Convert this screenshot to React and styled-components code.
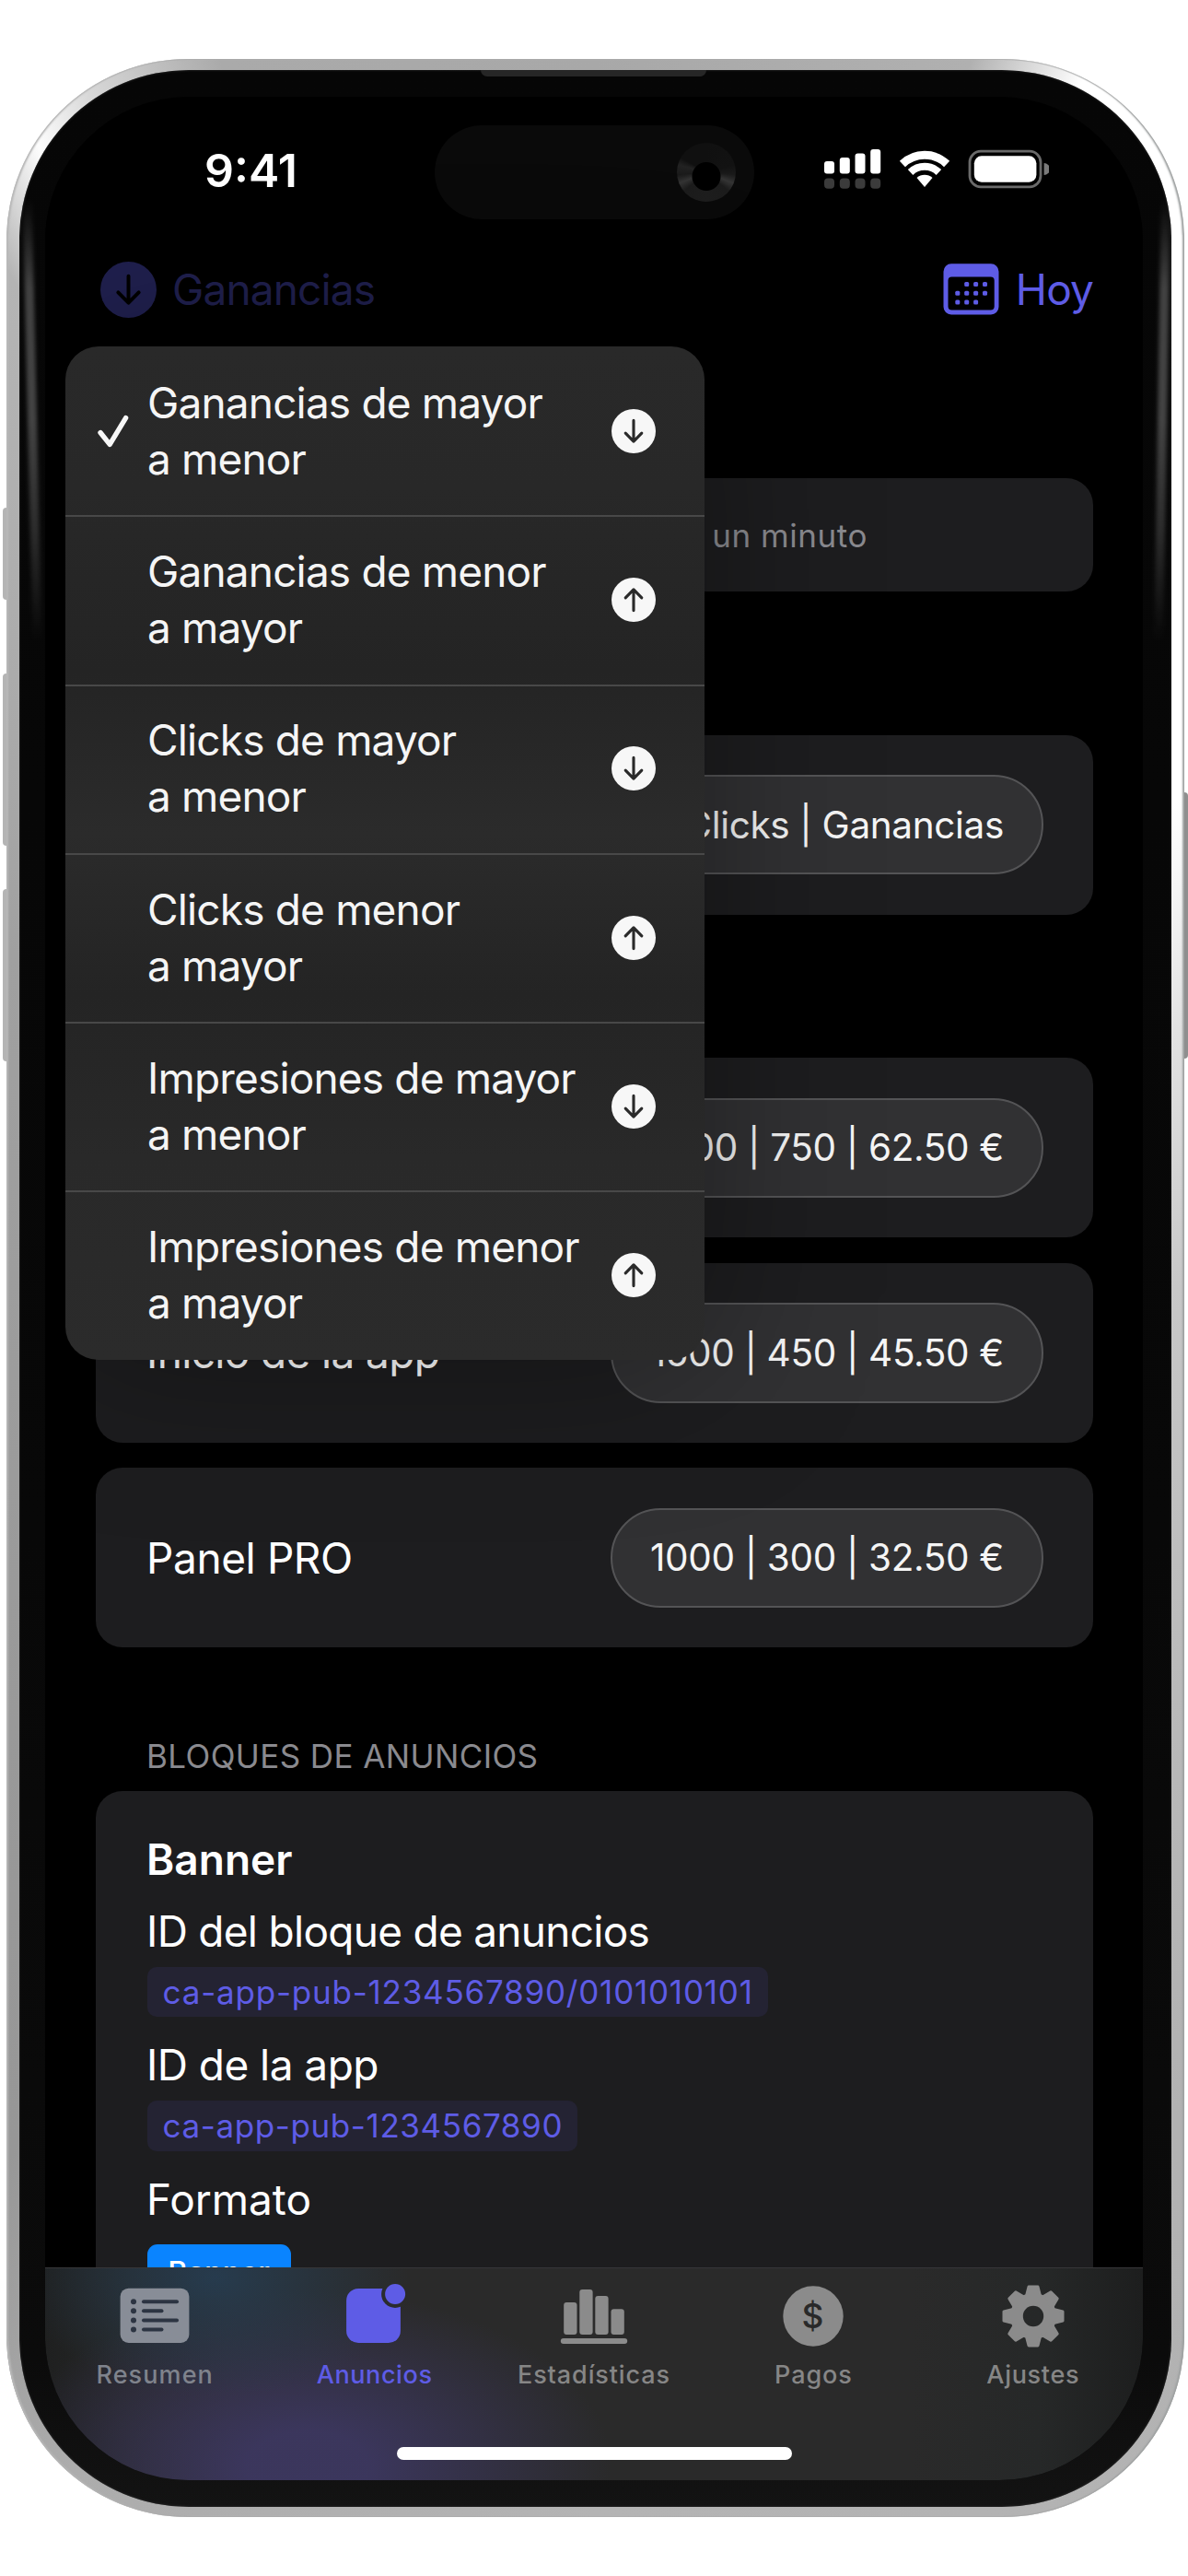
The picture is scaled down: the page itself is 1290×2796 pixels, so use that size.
import React from 'react';
import styled, { createGlobalStyle, css } from 'styled-components';

const COLORS = {
  accent: '#5e5ce6',
  accentDim: '#20204f',
  card: '#1d1d1f',
  grey: '#8b8b8b',
  white: '#f5f5f5',
};

const SORT_OPTIONS = [
  { first: 'Ganancias de mayor', second: 'a menor', down: true, checked: true },
  { first: 'Ganancias de menor', second: 'a mayor' },
  { first: 'Clicks de mayor', second: 'a menor', down: true },
  { first: 'Clicks de menor', second: 'a mayor' },
  { first: 'Impresiones de mayor', second: 'a menor', down: true },
  { first: 'Impresiones de menor', second: 'a mayor' },
];

const ArrowCircle = ({ down, size, color, arrow }) => (
  <svg width={size} height={size} viewBox="0 0 48 48">
    <circle cx="24" cy="24" r="24" fill={color} />
    <path
      d="M24 12.4V35M15.2 26.2L24 35.2L32.8 26.2"
      transform={down ? undefined : 'rotate(180 24 24)'}
      fill="none"
      stroke={arrow}
      strokeWidth="3.1"
      strokeLinecap="round"
      strokeLinejoin="round"
    />
  </svg>
);

const CheckIcon = () => (
  <svg width="36" height="36" viewBox="0 0 36 36">
    <path
      d="M4 19.5L14.2 32.4L31.6 3.600"
      fill="none"
      stroke="#f7f7f7"
      strokeWidth="5.4"
      strokeLinecap="round"
      strokeLinejoin="round"
    />
  </svg>
);

const CalendarIcon = () => (
  <svg width="61" height="56" viewBox="1024 286.5 61 56">
    <path
      fillRule="evenodd"
      fill={COLORS.accent}
      d="M1033 286.7h43a8.500 8.500 0 0 1 8.500 8.500v38.300a8.500 8.500 0 0 1-8.500 8.500h-43a8.500 8.500 0 0 1-8.500-8.500v-38.300a8.500 8.500 0 0 1 8.500-8.500zM1033.500 301a4 4 0 0 0-4 4v28a4 4 0 0 0 4 4h42.200a4 4 0 0 0 4-4v-28a4 4 0 0 0-4-4z"
    />
    <g fill={COLORS.accent}>
      {[
        [1, 0], [2, 0], [3, 0],
        [0, 1], [1, 1], [2, 1], [3, 1],
        [0, 2], [1, 2], [2, 2],
      ].map(([col, row]) => (
        <rect
          key={`${col}-${row}`}
          x={1037.3 + col * 9.9}
          y={306.4 + row * 9.8}
          width="5"
          height="5"
          rx="1.5"
        />
      ))}
    </g>
  </svg>
);

const SignalIcon = () => (
  <svg width="62" height="43" viewBox="896 162 62 43">
    <g fill="#fff">
      <rect x="896" y="175" width="11" height="13.5" rx="3" />
      <rect x="912.8" y="171" width="11" height="17.5" rx="3" />
      <rect x="929.5" y="166.5" width="11" height="22" rx="3" />
      <rect x="946.2" y="162" width="11" height="26.5" rx="3" />
    </g>
    <g fill="#3b3b3b">
      <rect x="896" y="193.4" width="11" height="11.4" rx="4" />
      <rect x="912.8" y="193.4" width="11" height="11.4" rx="4" />
      <rect x="929.5" y="193.4" width="11" height="11.4" rx="4" />
      <rect x="946.2" y="193.4" width="11" height="11.4" rx="4" />
    </g>
  </svg>
);

const WifiIcon = () => (
  <svg width="56" height="43" viewBox="977 162 56 43">
    <g fill="none" stroke="#fff" strokeWidth="8.8">
      <path d="M980.900 178A34.700 34.700 0 0 1 1029.100 178" />
      <path d="M989.600 187A22.200 22.200 0 0 1 1020.400 187" strokeWidth="8" />
    </g>
    <path d="M996.500 193A12.600 12.600 0 0 1 1013.500 193L1005 203z" fill="#fff" />
  </svg>
);

const BatteryIcon = () => (
  <svg width="88" height="43" viewBox="1051 162 88 43">
    <rect x="1053" y="164.2" width="77" height="38.6" rx="12" fill="none" stroke="#6a6a6a" strokeWidth="2.8" />
    <rect x="1057.8" y="169.3" width="67.6" height="28.4" rx="8" fill="#fff" />
    <path d="M1133.600 177a6.500 6.500 0 0 1 0 13z" fill="#7a7a7a" />
  </svg>
);

const SummaryIcon = () => (
  <svg width="76" height="70" viewBox="129 2479 76 70">
    <rect x="129.6" y="2483.7" width="74.8" height="59.3" rx="9" fill="#888d97" />
    {[2498.3, 2508.3, 2518.4, 2528.6].map((y, i) => (
      <g key={y} stroke="#2c3442" strokeLinecap="round">
        <path d={`M144 ${y}h.01`} strokeWidth="6" />
        <path d={`M155 ${y}H${i % 2 ? 174.5 : 191}`} strokeWidth="4" />
      </g>
    ))}
  </svg>
);

const AdsIcon = () => (
  <svg width="76" height="70" viewBox="368.5 2479 76 70">
    <mask id="badge-cut">
      <rect x="360" y="2470" width="100" height="90" fill="#fff" />
      <circle cx="428.6" cy="2490" r="15" fill="#000" />
    </mask>
    <rect
      x="375.6"
      y="2484"
      width="58.8"
      height="59"
      rx="13"
      fill={COLORS.accent}
      mask="url(#badge-cut)"
    />
    <circle cx="428.6" cy="2490" r="11" fill={COLORS.accent} />
  </svg>
);

const ChartIcon = () => (
  <svg width="76" height="70" viewBox="607 2479 76 70">
    <g fill={COLORS.grey}>
      <rect x="612.2" y="2499" width="14.3" height="35" rx="3" />
      <rect x="629.3" y="2485" width="14.3" height="49" rx="3" />
      <rect x="646.3" y="2492" width="14.3" height="42" rx="3" />
      <rect x="663.5" y="2506.3" width="14.3" height="27.7" rx="3" />
      <rect x="608.8" y="2538" width="72.4" height="6" rx="3" />
    </g>
  </svg>
);

const DollarIcon = () => (
  <svg width="76" height="70" viewBox="845 2479 76 70">
    <circle cx="883" cy="2514" r="32.7" fill={COLORS.grey} />
    <text
      x="883"
      y="2527"
      textAnchor="middle"
      fontFamily="Inter, sans-serif"
      fontSize="37"
      fill="#292929"
    >
      $
    </text>
  </svg>
);

const GearIcon = () => (
  <svg width="76" height="70" viewBox="-38 -35 76 70">
    <mask id="gear-hole">
      <rect x="-40" y="-40" width="80" height="80" fill="#fff" />
      <circle r="11.2" fill="#000" />
    </mask>
    <g mask="url(#gear-hole)" fill={COLORS.grey} stroke={COLORS.grey} strokeWidth="3" strokeLinejoin="round">
      <circle r="23.5" />
      {[0, 45, 90, 135, 180, 225, 270, 315].map((angle) => (
        <path key={angle} d="M-7.800 -21L-5 -32H5L7.800 -21z" transform={`rotate(${angle})`} />
      ))}
    </g>
  </svg>
);

const TABS = [
  { label: 'Resumen', Icon: SummaryIcon, track: 1.1, tint: '#7f838c' },
  { label: 'Anuncios', Icon: AdsIcon, track: 0.6, tint: COLORS.accent },
  { label: 'Estadísticas', Icon: ChartIcon, track: 0.9 },
  { label: 'Pagos', Icon: DollarIcon, track: 0.9 },
  { label: 'Ajustes', Icon: GearIcon, track: 0.7 },
];

const StatRow = ({ name, track = -0.65, children }) => (
  <Card>
    {name && <BodyText $track={track}>{name}</BodyText>}
    <Pill>{children}</Pill>
  </Card>
);

const SortMenu = () => (
  <Menu>
    {SORT_OPTIONS.map(({ first, second, down, checked }) => (
      <MenuItem key={first}>
        <CheckSlot>{checked && <CheckIcon />}</CheckSlot>
        <MenuText>
          {first}
          <br />
          {second}
        </MenuText>
        <ArrowCircle down={down} size={48} color="#f7f7f7" arrow="#2a2a2a" />
      </MenuItem>
    ))}
  </Menu>
);

const App = () => {
  return (
    <Page>
      <GlobalStyle />
      <Phone>
        <SideButton $top={487} $height={100} />
        <SideButton $top={667} $height={187} />
        <SideButton $top={901} $height={187} />
        <SideButton $right $top={796} $height={289} />
        <Bezel>
          <Earpiece />
          <Glare />
          <Glare $right />
          <Screen>
            <StatusBar>
              <Clock>9:41</Clock>
              <Island>
                <Camera />
              </Island>
              <StatusIcons>
                <SignalIcon />
                <WifiIcon />
                <BatteryIcon />
              </StatusIcons>
            </StatusBar>
            <NavBar>
              <NavButton $dim>
                <ArrowCircle down size={61} color={COLORS.accentDim} arrow="#000" />
                Ganancias
              </NavButton>
              <NavButton>
                <CalendarIcon />
                Hoy
              </NavButton>
            </NavBar>
            <Content>
              <NoticeCard>un minuto</NoticeCard>
              <SectionTitle />
              <StatRow>Clicks | Ganancias</StatRow>
              <SectionTitle />
              <CardStack>
                <StatRow>2500 | 750 | 62.50 €</StatRow>
                <StatRow name="Inicio de la app">1500 | 450 | 45.50 €</StatRow>
                <StatRow name="Panel PRO" track={-0.4}>
                  1000 | 300 | 32.50 €
                </StatRow>
              </CardStack>
              <SectionTitle>BLOQUES DE ANUNCIOS</SectionTitle>
              <BlockCard>
                <BodyText $bold>Banner</BodyText>
                <FieldName $first>ID del bloque de anuncios</FieldName>
                <Chip $width={674.7} $track={0.78}>ca-app-pub-1234567890/0101010101</Chip>
                <FieldName $track={-0.55}>ID de la app</FieldName>
                <Chip $width={467.5} $track={0.6}>ca-app-pub-1234567890</Chip>
                <FieldName $track={-0.05}>Formato</FieldName>
                <Tag>Banner</Tag>
              </BlockCard>
            </Content>
            <TabBar>
              <Tabs>
                {TABS.map(({ label, Icon, track, tint }) => (
                  <Tab key={label} $tint={tint} $track={track}>
                    <Icon />
                    <span>{label}</span>
                  </Tab>
                ))}
              </Tabs>
              <HomeIndicator />
            </TabBar>
            <SortMenu />
          </Screen>
        </Bezel>
      </Phone>
    </Page>
  );
};

export default App;

const GlobalStyle = createGlobalStyle`
  * {
    box-sizing: border-box;
  }

  body {
    margin: 0;
    background: #fff;
    font-family: Inter, 'Liberation Sans', sans-serif;
  }

  svg {
    display: block;
    flex-shrink: 0;
  }
`;

const Page = styled.div`
  width: 1290px;
  height: 2796px;
  padding: 64px 0 0 6.5px;
  overflow: hidden;
`;

const Phone = styled.div`
  position: relative;
  width: 1279px;
  height: 2668px;
  padding: 11.5px 14px;
  border-radius: 197px;
  background: conic-gradient(
    #a8a8a8 0deg,
    #b0b0b0 17deg,
    #fff 22deg,
    #fff 50deg,
    #e2e2e2 66deg,
    #c8c8c8 90deg,
    #b2b2b2 145deg,
    #b4b4b4 180deg,
    #acacac 204deg,
    #979797 214deg,
    #a0a0a0 300deg,
    #b4b4b4 330deg,
    #fdfdfd 334deg,
    #d8d8d8 337deg,
    #aaa 343deg,
    #a8a8a8 360deg
  );
  box-shadow: inset -3px 0 2px -1px #9fa2a2, inset 2px 0 2px #b9b9b9,
    inset 0 0 0 1px rgba(160, 160, 160, 0.5);
`;

const SideButton = styled.div`
  position: absolute;
  top: ${(props) => props.$top}px;
  ${(props) => (props.$right ? 'right: -4px;' : 'left: -4px;')}
  width: 4px;
  height: ${(props) => props.$height}px;
  border-radius: ${(props) => (props.$right ? '0 4px 4px 0' : '4px 0 0 4px')};
  background: ${(props) => (props.$right ? '#8f8f8f' : '#b4b4b4')};
`;

const Bezel = styled.div`
  position: relative;
  width: 100%;
  height: 100%;
  padding: 29.5px 28.5px;
  border-radius: 184px;
  background: linear-gradient(#060606 0, #080808 60%, #0b0b0b 94%, #131313 100%);
  box-shadow: inset 0 0 3px #303030;
  overflow: hidden;
`;

const Earpiece = styled.div`
  position: absolute;
  top: 0;
  left: 501.5px;
  width: 245px;
  height: 7.5px;
  border-radius: 0 0 7px 7px;
  background: #262626;
`;

const Glare = styled.div`
  position: absolute;
  top: 140px;
  width: 10px;
  height: 480px;
  filter: blur(2px);
  background: linear-gradient(transparent, #424242 20%, #444 50%, #2c2c2c 75%, transparent);
  ${(props) =>
    props.$right
      ? css`
          right: 5px;
          transform: rotate(0.9deg);
        `
      : css`
          left: 9px;
          transform: rotate(-1.3deg);
        `}
`;

const Screen = styled.div`
  position: relative;
  display: flex;
  flex-direction: column;
  width: 1192px;
  height: 2587px;
  border-radius: 156px;
  background: #000;
  color: ${COLORS.white};
  overflow: hidden;
`;

const StatusBar = styled.div`
  display: grid;
  grid-template-columns: 423px 347px 1fr;
  flex-shrink: 0;
  height: 164px;
`;

const Clock = styled.div`
  padding: 48.5px 0 0 173px;
  font-size: 50px;
  font-weight: 600;
  line-height: 62px;
  color: #fff;
`;

const Island = styled.div`
  display: flex;
  align-items: center;
  justify-content: flex-end;
  height: 102px;
  margin-top: 31px;
  padding-right: 20px;
  border-radius: 51px;
  background: #0a0a0a;
`;

const Camera = styled.div`
  width: 64px;
  height: 64px;
  border-radius: 50%;
  background: radial-gradient(circle at 50% 57%, #000 15px, transparent 16px),
    conic-gradient(
      #101010 0deg,
      #121212 75deg,
      #1a1a1a 95deg,
      #343434 112deg,
      #1c1c1c 130deg,
      #1e1e1e 180deg,
      #1c1c1c 230deg,
      #343434 248deg,
      #1a1a1a 265deg,
      #222 285deg,
      #101010 300deg
    );
`;

const StatusIcons = styled.div`
  display: flex;
  gap: 19px;
  padding: 57px 0 0 76px;
`;

const NavBar = styled.div`
  display: flex;
  align-items: center;
  justify-content: space-between;
  flex-shrink: 0;
  height: 90px;
  padding: 0 54px 0 60px;
`;

const NavButton = styled.div`
  display: flex;
  align-items: center;
  gap: ${(props) => (props.$dim ? '17px' : '18px')};
  font-size: 46px;
  letter-spacing: -0.85px;
  color: ${(props) => (props.$dim ? COLORS.accentDim : COLORS.accent)};
`;

const Content = styled.div`
  flex: 1;
  min-height: 0;
  padding: 160px 54px 0 55px;
  overflow: hidden;
`;

const cardBox = css`
  border-radius: 29px;
  background: ${COLORS.card};
`;

const NoticeCard = styled.div`
  ${cardBox}
  display: flex;
  align-items: center;
  justify-content: flex-end;
  height: 123px;
  padding-right: 245px;
  font-size: 35px;
  letter-spacing: 0.55px;
  color: #8a8a8f;
`;

const SectionTitle = styled.div`
  display: flex;
  align-items: flex-end;
  height: 155.7px;
  padding: 0 0 16.5px 55px;
  font-size: 35px;
  line-height: 44px;
  letter-spacing: 0.4px;
  color: #8a8a8f;
`;

const CardStack = styled.div`
  display: flex;
  flex-direction: column;
  gap: 27.5px;
`;

const Card = styled.div`
  ${cardBox}
  display: flex;
  align-items: center;
  height: 195px;
  padding: 0 54px 0 55px;
`;

const BodyText = styled.div`
  font-size: 46px;
  font-weight: ${(props) => (props.$bold ? 600 : 400)};
  line-height: 60px;
  letter-spacing: ${(props) => props.$track || 0}px;
  white-space: nowrap;
  color: #fff;
`;

const Pill = styled.div`
  display: flex;
  align-items: center;
  justify-content: flex-end;
  min-width: 470px;
  height: 108.5px;
  margin-left: auto;
  padding-right: 41px;
  border: 2.5px solid #545456;
  border-radius: 55px;
  background: #313133;
  font-size: 40.5px;
  letter-spacing: -0.35px;
  white-space: nowrap;
`;

const BlockCard = styled.div`
  ${cardBox}
  display: flex;
  flex-direction: column;
  align-items: flex-start;
  height: 900px;
  padding: 43.5px 55px;
`;

const FieldName = styled.div`
  margin-top: ${(props) => (props.$first ? 18.6 : 22)}px;
  font-size: 46px;
  line-height: 60px;
  letter-spacing: ${(props) => (props.$track === undefined ? -0.72 : props.$track)}px;
  color: #fff;
`;

const Chip = styled.div`
  width: ${(props) => props.$width}px;
  height: 54.3px;
  margin: 9px 0 0 0.6px;
  padding-left: 17px;
  border-radius: 10px;
  background: #242333;
  font-size: 35px;
  line-height: 54.3px;
  letter-spacing: ${(props) => props.$track}px;
  white-space: nowrap;
  color: ${COLORS.accent};
`;

const Tag = styled.div`
  margin: 19px 0 0 0.6px;
  width: 156px;
  height: 66px;
  border-radius: 11px;
  background: #0a84ff;
  font-size: 32.5px;
  font-weight: 500;
  line-height: 62px;
  text-align: center;
  color: #fff;
`;

const TabBar = styled.div`
  display: flex;
  flex-direction: column;
  align-items: center;
  flex-shrink: 0;
  height: 231px;
  padding-top: 16.5px;
  border-top: 1.5px solid #363638;
  background: radial-gradient(ellipse 210px 130px at 185px 10px, rgba(38, 62, 84, 0.85), transparent),
    radial-gradient(ellipse 330px 190px at 285px 215px, rgba(60, 55, 95, 0.95) 20%, transparent),
    linear-gradient(
      90deg,
      #1f2020 0,
      #262727 90px,
      #2a2a2a 200px,
      #2a2a2a 940px,
      #262828 1080px,
      #1d1e1e 1192px
    );
`;

const Tabs = styled.div`
  display: grid;
  grid-template-columns: repeat(5, 1fr);
  width: 100%;
`;

const Tab = styled.div`
  display: flex;
  flex-direction: column;
  align-items: center;
  gap: 12.5px;
  font-size: 27px;
  font-weight: 500;
  line-height: 34px;
  letter-spacing: ${(props) => props.$track}px;
  color: ${(props) => props.$tint || '#868686'};
`;

const HomeIndicator = styled.div`
  width: 429px;
  height: 14.5px;
  margin-top: 60.5px;
  border-radius: 8px;
  background: #fff;
`;

// drop-down that floats over the navigation bar content
const Menu = styled.div`
  position: absolute;
  top: 271px;
  left: 22px;
  width: 694px;
  border-radius: 36px;
  background: linear-gradient(
    #292929 0,
    #282828 14%,
    #242424 32%,
    #2b2b2b 48%,
    #242424 64%,
    #292929 80%,
    #2b2b2b 100%
  );
  box-shadow: 0 0 180px rgba(0, 4, 0, 0.36);
  overflow: hidden;
`;

const MenuItem = styled.div`
  display: flex;
  align-items: center;
  height: 183.3px;
  padding: 1px 53.5px 0 34px;

  & + & {
    padding: 0 53.5px 2px 34px;
    border-top: 2px solid #484848;
  }
`;

const CheckSlot = styled.div`
  width: 55px;
`;

const MenuText = styled.div`
  flex: 1;
  font-size: 46px;
  line-height: 61px;
  letter-spacing: -0.84px;
`;
